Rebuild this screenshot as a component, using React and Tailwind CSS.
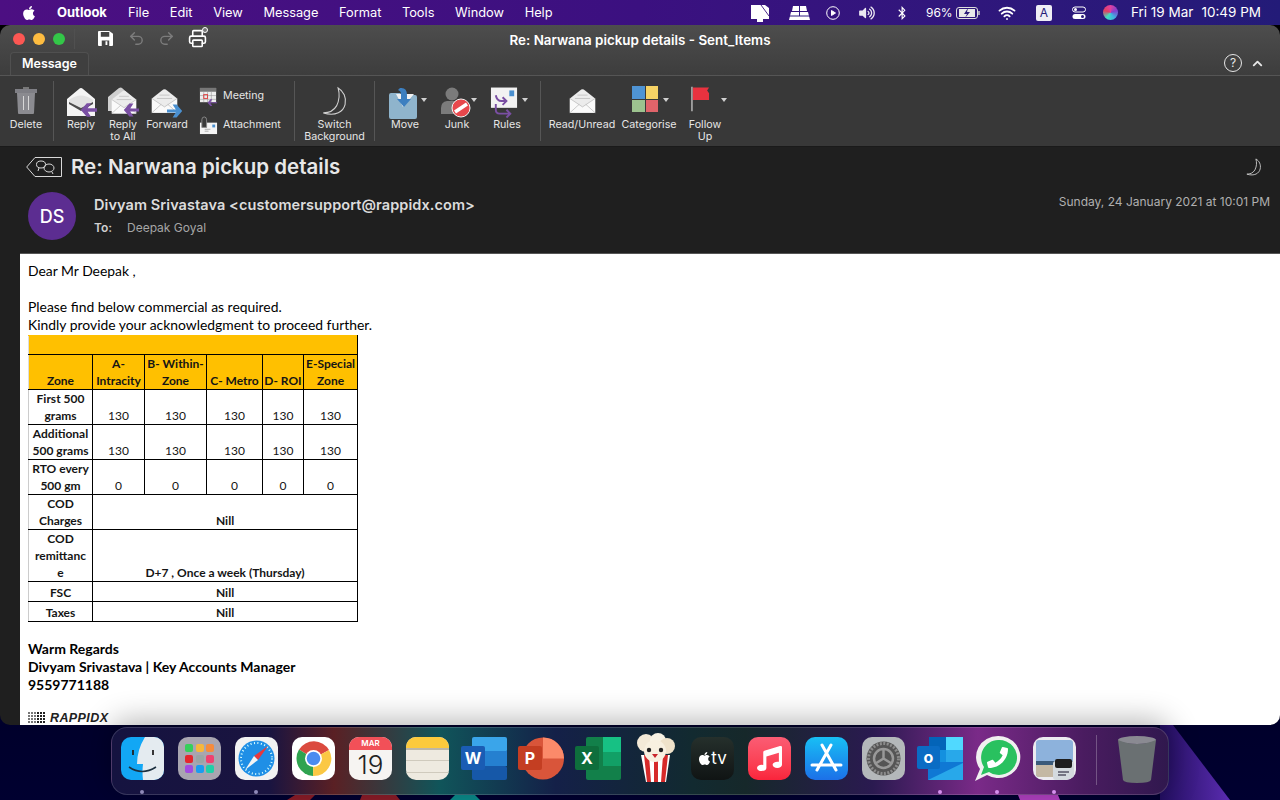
import React from 'react'
import { ChevronUp, Printer, Redo2, Undo2, Wifi } from 'lucide-react'
import { FaApple, FaBluetoothB, FaMusic, FaPhoneAlt, FaVolumeUp } from 'react-icons/fa'

function Moon({ className, width = 1.4 }) {
  return (
    <svg viewBox="0 0 36 40" className={className} fill="none" stroke="currentColor" strokeWidth={width}>
      <path d="M22 2c7 4 11 12 9 21-2 9-12 16-28 11 6 0 13-2 17-9 4-8 4-16 2-23z" />
    </svg>
  )
}

function Envelope({ className, dark }) {
  return (
    <svg viewBox="0 0 32 32" className={className}>
      <path d="M1 13 14.500 2.500q1.500-1 3 0L31 13v17H1z" fill={dark ? '#f4f4f4' : '#ececec'} />
      <path d="M1 13l15 10 15-10v17H1z" fill="#fafafa" />
      <path d="M1 13l15 10 15-10M1 30l11-10M31 30 20 20M7 13h18M10 9h12" stroke="#b5b5b5" strokeWidth=".8" fill="none" />
    </svg>
  )
}

function ArrowIcon({ color, flip, className }) {
  return (
    <svg viewBox="0 0 20 16" className={className} style={flip ? { transform: 'scaleX(-1)' } : undefined}>
      <path d="M20 6H9l4-6H8L1 8l7 8h5L9 10h11z" fill={color} />
    </svg>
  )
}

function ReplyIcon() {
  return (
    <div className="relative h-[32px] w-[31px]">
      <svg viewBox="0 0 31 32" className="h-full w-full">
        <path d="M1 13 13 3q2-2 4 0l12 10v17H1z" fill="#f4f4f4" />
        <path d="M3 14q12-9 24 0v2L15 22 3 16z" fill="#e2e2e2" />
        <path d="M3 16l12 6 12-6v2l-12 7-12-7z" fill="#4c4c4c" />
      </svg>
      <ArrowIcon color="#7a4fa3" className="absolute bottom-[1px] right-0 h-[14px] w-[17px]" />
    </div>
  )
}

function ReplyAllIcon() {
  return (
    <div className="relative h-[32px] w-[31px]">
      <svg viewBox="0 0 31 32" className="h-full w-full">
        <path d="M0 11 11 2q2-1 3 0l9 8v15H0z" fill="#cfcfcf" />
      </svg>
      <Envelope className="absolute left-[3px] top-[2px] h-[28px] w-[26px]" />
      <ArrowIcon color="#7a4fa3" className="absolute bottom-[1px] right-0 h-[14px] w-[16px]" />
    </div>
  )
}

function ForwardIcon() {
  return (
    <div className="relative h-[32px] w-[32px]">
      <Envelope className="absolute left-0 top-0 h-[30px] w-[27px]" />
      <ArrowIcon color="#4a90d0" flip className="absolute bottom-0 right-0 h-[14px] w-[16px]" />
    </div>
  )
}

function TrashRibbonIcon() {
  return (
    <svg viewBox="0 0 22 28" className="h-[28px] w-[22px]">
      <path d="M8 1h6v2H8z" fill="#777" />
      <path d="M0 3h22v4H0z" fill="#7f7f85" />
      <path d="M2 7h18l-1 20q0 1-1 1H4q-1 0-1-1z" fill="#8b8b90" />
      <path d="M8.500 10v14M13.500 10v14" stroke="#d8d8d8" strokeWidth="1" />
    </svg>
  )
}

function MeetingIcon() {
  return (
    <svg viewBox="0 0 20 20" className="h-[19px] w-[19px]">
      <rect x="1" y="1" width="17" height="15" fill="#eee" />
      <rect x="1" y="1" width="17" height="4" fill="#777" />
      <path d="M1 9h17M1 13h17M5 5v11M9 5v11M13 5v11" stroke="#999" strokeWidth=".6" />
      <rect x="5" y="8" width="4" height="4" fill="none" stroke="#e04040" strokeWidth="1" />
      <path d="M19 16h-7l2-3h-2l-3 3.500 3 3.500h2l-2-3h7z" fill="#7a4fa3" />
    </svg>
  )
}

function AttachmentIcon() {
  return (
    <svg viewBox="0 0 20 20" className="h-[19px] w-[19px]">
      <rect x="1" y="7" width="18" height="12" fill="#f4f4f4" />
      <rect x="14" y="9" width="3" height="3" fill="#4a90d0" />
      <path d="M6 14h6M6 16h4" stroke="#999" strokeWidth=".8" />
      <path d="M3 12V4q0-3 2.500-3T8 4v8H3z" fill="#3a3a3a" stroke="#8a8a8a" />
    </svg>
  )
}

function MoveIcon() {
  return (
    <svg viewBox="0 0 30 34" className="h-[34px] w-[30px]">
      <path d="M1 9q0-2 2-2h9l2 2h13q2 0 2 2v20q0 2-2 2H3q-2 0-2-2z" fill="#8fb4cc" />
      <path d="M8 8h18l-11 13z" fill="#f2f2f2" />
      <path d="M12 2q7-1 7 7v4h4l-7 8-7-8h4V8q0-3-3-4z" fill="#3c7fc0" />
    </svg>
  )
}

function JunkIcon() {
  return (
    <svg viewBox="0 0 30 32" className="h-[32px] w-[30px]">
      <circle cx="11" cy="8" r="6.500" fill="#7b7b7b" />
      <path d="M0 28v-6q0-6 6-7h10q6 1 6 7v6z" fill="#7b7b7b" />
      <circle cx="20" cy="22" r="9" fill="#e8474c" stroke="#f4f4f4" strokeWidth="1" />
      <path d="M14 26 26 18" stroke="#fff" strokeWidth="3.500" />
    </svg>
  )
}

function RulesIcon() {
  return (
    <svg viewBox="0 0 30 34" className="h-[34px] w-[29px]">
      <rect x="1" y="1" width="27" height="21" fill="#f2f2f2" />
      <rect x="20" y="4" width="5" height="6" fill="#4a90d0" />
      <path d="M6 9q1 6 6 6h4M13 11l4 4-4 4M6 18v6q0 4 4 4h10M17 24l4 4-4 4" stroke="#7a4fa3" strokeWidth="2" fill="none" />
    </svg>
  )
}

function CategoriesIcon() {
  return (
    <div className="grid h-[26px] w-[26px] grid-cols-2 grid-rows-2 gap-[1px]">
      <div className="bg-[#4f94d4]" />
      <div className="bg-[#f6d365]" />
      <div className="bg-[#9cc38f]" />
      <div className="bg-[#e0646a]" />
    </div>
  )
}

function FlagIcon() {
  return (
    <svg viewBox="0 0 20 26" className="h-[26px] w-[19px]">
      <path d="M1 0v26" stroke="#c8c8c8" strokeWidth="1.400" />
      <path d="M2 1h17l-2 3 2 3v7H2z" fill="#e8323f" />
    </svg>
  )
}

function Caret({ className }) {
  return <span className={'absolute top-[21px] h-0 w-0 border-x-[3px] border-t-[4px] border-x-transparent border-t-[#d0d0d0] ' + className} />
}

function RibbonButton({ w, label, icon, caret, shift }) {
  return (
    <div className={'relative flex shrink-0 flex-col items-center pt-[9px] ' + w}>
      <div className={'flex h-[34px] items-start ' + (shift || '')}>{icon}</div>
      <div className="mt-[-1px] text-center text-[10.700px] leading-[12px] whitespace-nowrap text-[#e6e6e6]">
        {label.map((line) => (
          <div key={line}>{line}</div>
        ))}
      </div>
      {caret && <Caret className={caret} />}
    </div>
  )
}

const Sep = () => <div className="my-[4px] w-[1px] shrink-0 bg-[#565656]" />

function StatusIcons() {
  return (
    <div className="ml-auto flex items-center text-white">
      <svg viewBox="0 0 20 18" className="h-[18px] w-[20px]">
        <path d="M1 1h14l4 3v11H1z" fill="#fff" />
        <path d="M11 1l8 11" stroke="#4a2a88" strokeWidth="1" />
        <path d="M7 15h6v3H7z" fill="#fff" />
      </svg>
      <svg viewBox="0 0 21 16" className="ml-[19px] h-[16px] w-[21px]">
        <path d="M4 1h13l1 5H3zM2 7h17l2 8H0z" fill="#fff" />
        <path d="M10.500 1v5M0 11h21M10.500 7v4" stroke="#2f1a80" strokeWidth="1" />
      </svg>
      <svg viewBox="0 0 14 14" className="ml-[16px] h-[14px] w-[14px]" fill="none" stroke="#fff">
        <circle cx="7" cy="7" r="6.300" />
        <path d="M5.500 4.500 9.500 7l-4 2.500z" fill="#fff" />
      </svg>
      <FaVolumeUp className="ml-[19px] h-[14px] w-[16px] opacity-90" />
      <FaBluetoothB className="ml-[22px] h-[14px] w-[10px]" />
      <span className="ml-[19px] w-[24px] text-[12px] whitespace-nowrap">96%</span>
      <svg viewBox="0 0 25 12" className="ml-[6px] h-[12px] w-[25px]" fill="none">
        <rect x=".5" y=".5" width="21" height="11" rx="2.500" stroke="#ddd" />
        <path d="M23 4v4" stroke="#ccc" strokeWidth="1.500" />
        <path d="M3 2h16v8H3z" fill="#e8e8e8" />
        <path d="M12 1 8 7h3l-2 4 5-6h-3z" fill="#2a1a78" />
      </svg>
      <Wifi className="ml-[17px] h-[18px] w-[18px]" strokeWidth={2.5} />
      <span className="ml-[20px] flex h-[16px] w-[16px] items-center justify-center rounded-[2px] bg-[#efeef5] text-[12px] text-[#241a78]">A</span>
      <svg viewBox="0 0 14 14" className="ml-[20px] h-[14px] w-[14px]">
        <rect x=".5" y="1" width="13" height="5" rx="2.500" fill="none" stroke="#fff" />
        <circle cx="3.500" cy="3.500" r="1.500" fill="#fff" />
        <rect x=".5" y="8" width="13" height="5" rx="2.500" fill="#fff" />
        <circle cx="10.500" cy="10.500" r="1.500" fill="#2a1a78" />
      </svg>
      <div className="ml-[17px] h-[15px] w-[15px] rounded-full bg-[conic-gradient(#e040a0,#8040d0,#40b0e0,#40e0c0,#e04060,#e040a0)]" />
      <span className="ml-[13px] text-[13.500px] whitespace-nowrap">Fri 19 Mar</span>
      <span className="ml-[8px] mr-[19px] text-[13.500px] whitespace-nowrap">10:49 PM</span>
    </div>
  )
}

function MenuBar() {
  const items = ['File', 'Edit', 'View', 'Message', 'Format', 'Tools', 'Window', 'Help']
  return (
    <div className="relative flex h-[25px] shrink-0 items-center bg-gradient-to-r from-[#4c0f82] via-[#3b1080] to-[#231b78] pl-[22px] text-[12.800px] text-white">
      <FaApple className="h-[16px] w-[14px]" />
      <span className="ml-[21px] text-[13px] font-bold">Outlook</span>
      <div className="ml-[21px] flex gap-[20.600px]">
        {items.map((item) => (
          <span key={item}>{item}</span>
        ))}
      </div>
      <StatusIcons />
    </div>
  )
}

function TitleBar() {
  return (
    <div className="relative h-[50px] shrink-0 bg-gradient-to-b from-[#4d4d4d] to-[#3d3d3d]">
      <div className="flex h-[27px] items-center pl-[13px]">
        <div className="h-[12px] w-[12px] rounded-full bg-[#fc5753]" />
        <div className="ml-[8px] h-[12px] w-[12px] rounded-full bg-[#fdbc40]" />
        <div className="ml-[8px] h-[12px] w-[12px] rounded-full bg-[#33c748]" />
        <div className="ml-[9px] h-[20px] w-[1px] bg-[#505050]" />
        <svg viewBox="0 0 16 16" className="ml-[17px] h-[15px] w-[15px] translate-x-[6px]">
          <path d="M0 1q0-1 1-1h11l4 3v12q0 1-1 1H1q-1 0-1-1z" fill="#fff" />
          <path d="M3 1h9v5H3zM4 10h8v6H4z" fill="#444" />
          <path d="M8 11h2v4H8z" fill="#fff" />
        </svg>
        <Undo2 className="ml-[21px] h-[17px] w-[17px] text-[#7c7c7c]" />
        <Redo2 className="ml-[13px] h-[17px] w-[17px] text-[#7c7c7c]" />
        <div className="relative ml-[13px]">
          <Printer className="h-[19px] w-[19px] text-white" strokeWidth={2} />
          <span className="absolute -right-[1px] -top-[2px] h-[6px] w-[6px] rounded-full border border-white bg-[#777]" />
        </div>
      </div>
      <div className="absolute inset-x-0 top-[5px] text-center text-[13.400px] font-semibold text-white">
        Re: Narwana pickup details - Sent_Items
      </div>
      <div className="flex items-end justify-between">
        <div className="ml-[10px] flex h-[23px] w-[79px] items-center justify-center rounded-t-[4px] border-x border-t border-[#505050] bg-[#3f3f3f] text-[12.500px] font-semibold text-white">
          Message
        </div>
        <div className="mb-[3px] mr-[15px] flex items-center gap-[8px] text-[#e6e6e6]">
          <div className="flex h-[18px] w-[18px] items-center justify-center rounded-full border border-[#e6e6e6] text-[12px]">?</div>
          <ChevronUp className="h-[15px] w-[15px]" strokeWidth={3} />
        </div>
      </div>
    </div>
  )
}

function Ribbon() {
  return (
    <div className="flex h-[71px] shrink-0 border-t border-[#555] bg-[#383838] py-[1px]">
      <RibbonButton w="w-[53px] pr-[1px]" label={['Delete']} icon={<TrashRibbonIcon />} />
      <Sep />
      <RibbonButton w="w-[54px]" label={['Reply']} icon={<ReplyIcon />} />
      <RibbonButton w="w-[30px]" label={['Reply', 'to All']} icon={<ReplyAllIcon />} />
      <RibbonButton w="w-[58px]" label={['Forward']} icon={<ForwardIcon />} />
      <div className="ml-[3px] flex w-[95px] shrink-0 flex-col gap-[10px] pt-[10px] text-[10.700px] text-[#e6e6e6]">
        <div className="flex items-center gap-[5px]">
          <MeetingIcon />
          <span>Meeting</span>
        </div>
        <div className="flex items-center gap-[5px]">
          <AttachmentIcon />
          <span>Attachment</span>
        </div>
      </div>
      <Sep />
      <RibbonButton w="w-[79px]" label={['Switch', 'Background']} icon={<Moon className="h-[32px] w-[28px] text-[#d0d0d0]" />} />
      <Sep />
      <RibbonButton w="w-[60px]" label={['Move']} icon={<MoveIcon />} caret="left-[46px]" shift="mr-[5px]" />
      <RibbonButton w="w-[44px]" label={['Junk']} icon={<JunkIcon />} caret="left-[36px]" shift="mr-[3px]" />
      <RibbonButton w="w-[56px]" label={['Rules']} icon={<RulesIcon />} caret="left-[43px]" shift="mr-[5px]" />
      <div className="w-[5px] shrink-0" />
      <Sep />
      <RibbonButton w="w-[82px]" label={['Read/Unread']} icon={<Envelope className="h-[30px] w-[27px]" />} />
      <RibbonButton w="w-[52px]" label={['Categorise']} icon={<CategoriesIcon />} caret="left-[40px]" shift="mr-[8px]" />
      <RibbonButton w="w-[60px]" label={['Follow', 'Up']} icon={<FlagIcon />} caret="left-[46px]" shift="mr-[9px]" />
    </div>
  )
}

function MessageHeader() {
  return (
    <div className="h-[107px] shrink-0 border-t border-[#1a1a1a] bg-[#1f1f1f] pl-[26px] pr-[10px] pt-[8px]">
      <div className="flex items-center">
        <svg viewBox="0 0 36 20" className="h-[20px] w-[36px] text-[#d8d8d8]" fill="none" stroke="currentColor">
          <path d="M9 .5h26.500v19H9L.700 10z" />
          <ellipse cx="15" cy="7.500" rx="4.500" ry="3.500" />
          <ellipse cx="23" cy="11" rx="5" ry="4" />
          <path d="M13 11l-1 3M26 15l1 2" />
        </svg>
        <h1 className="ml-[9px] text-[20.500px] leading-[24px] font-semibold text-[#e8e8e8]">Re: Narwana pickup details</h1>
        <Moon width={2} className="ml-auto mr-[7px] h-[19px] w-[18px] text-[#c4c4c4]" />
      </div>
      <div className="mt-[13px] flex">
        <div className="ml-[2px] flex h-[48px] w-[48px] shrink-0 items-center justify-center rounded-full bg-[#5c2d91] text-[18px] font-medium text-white">DS</div>
        <div className="ml-[18px] pt-[4px]">
          <div className="text-[14.500px] leading-[18px] font-semibold tracking-[.08px] text-[#dcdcdc]">Divyam Srivastava &lt;customersupport@rappidx.com&gt;</div>
          <div className="mt-[6px] flex text-[12px] leading-[16px]">
            <span className="w-[33px] font-semibold text-[#cfcfcf]">To:</span>
            <span className="text-[#a6a6a6]">Deepak Goyal</span>
          </div>
        </div>
        <div className="ml-auto mt-[1px] text-[12px] leading-[18px] text-[#b0b0b0]">Sunday, 24 January 2021 at 10:01 PM</div>
      </div>
    </div>
  )
}

const cellCls = 'border border-black p-0 text-center align-bottom'

function RateRow({ label, values, h }) {
  return (
    <tr className={h}>
      <td className={cellCls + ' border-l-[#ccc] font-bold'}>{label}</td>
      {values.map((value, i) => (
        <td key={i} className={cellCls}>{value}</td>
      ))}
    </tr>
  )
}

function SpanRow({ label, value, h }) {
  return (
    <tr className={h}>
      <td className={cellCls + ' border-l-[#ccc] font-bold'}>{label}</td>
      <td colSpan={5} className={cellCls + ' font-bold'}>{value}</td>
    </tr>
  )
}

function RateTable() {
  return (
    <table className="w-[329px] table-fixed border-collapse text-[12px] leading-[17px] text-[#151515]">
      <colgroup>
        <col className="w-[64px]" />
        <col className="w-[52px]" />
        <col className="w-[62px]" />
        <col className="w-[56px]" />
        <col className="w-[41px]" />
        <col className="w-[54px]" />
      </colgroup>
      <tbody>
        <tr className="h-[19px] bg-[#ffc000]">
          <td colSpan={6} className="border border-black border-l-[#ddd] border-t-[#ffc000] p-0" />
        </tr>
        <tr className="h-[35px] bg-[#ffc000] font-bold">
          <td className={cellCls + ' border-l-[#ddd]'}>Zone</td>
          <td className={cellCls}>A-<br />Intracity</td>
          <td className={cellCls}>B- Within-<br />Zone</td>
          <td className={cellCls}>C- Metro</td>
          <td className={cellCls}>D- ROI</td>
          <td className={cellCls}>E-Special<br />Zone</td>
        </tr>
        <RateRow h="h-[35px]" label={<>First 500<br />grams</>} values={[130, 130, 130, 130, 130]} />
        <RateRow h="h-[35px]" label={<>Additional<br />500 grams</>} values={[130, 130, 130, 130, 130]} />
        <RateRow h="h-[35px]" label={<>RTO every<br />500 gm</>} values={[0, 0, 0, 0, 0]} />
        <SpanRow h="h-[35px]" label={<>COD<br />Charges</>} value="Nill" />
        <SpanRow h="h-[52px]" label={<>COD<br />remittanc<br />e</>} value="D+7 , Once a week (Thursday)" />
        <SpanRow h="h-[20px]" label="FSC" value="Nill" />
        <SpanRow h="h-[20px]" label="Taxes" value="Nill" />
      </tbody>
    </table>
  )
}

function RappidxLogo() {
  return (
    <div className="mt-[17px] flex h-[14px] items-start">
      <div className="mt-[1px] grid grid-cols-[repeat(6,2px)] gap-[1px]">
        {Array.from({ length: 24 }).map((_, i) => (
          <div key={i} className={'h-[2px] w-[2px] ' + (i % 6 > 2 ? 'bg-[#222]' : 'bg-[#777]')} />
        ))}
      </div>
      <span className="ml-[5px] font-['Liberation_Sans',sans-serif] text-[12.500px] leading-[14px] font-bold tracking-[.4px] text-[#222] italic">RAPPIDX</span>
    </div>
  )
}

function MessageBody() {
  return (
    <div className="flex min-h-0 flex-1 overflow-hidden bg-[#1f1f1f] pl-[20px]">
      <div className="flex-1 overflow-hidden border-t border-[#555] bg-white pl-[8px] pt-[8px] font-['Lato',sans-serif] text-[13.900px] leading-[18px] text-black">
        <p>Dear Mr Deepak ,</p>
        <p className="mt-[18px]">Please find below commercial as required.</p>
        <p>Kindly provide your acknowledgment to proceed further.</p>
        <div className="mt-[1px]">
          <RateTable />
        </div>
        <div className="mt-[18px] text-[14px] font-bold">
          <p>Warm Regards</p>
          <p>Divyam Srivastava | Key Accounts Manager</p>
          <p>9559771188</p>
        </div>
        <RappidxLogo />
      </div>
    </div>
  )
}

const tile = 'relative h-[43px] w-[43px] shrink-0 overflow-hidden rounded-[10px]'

function Finder() {
  return (
    <svg viewBox="0 0 43 43" className={tile}>
      <rect width="43" height="43" fill="#12a7f5" />
      <path d="M24 0h19v43H22q-1-8 0-16h-6q0-14 8-27z" fill="#e4ebf0" />
      <path d="M12 13v5M32 13v5" stroke="#222" strokeWidth="1.800" />
      <path d="M8 30q13 9 27 0" stroke="#1c3040" strokeWidth="1.600" fill="none" />
    </svg>
  )
}

function Launchpad() {
  const colors = ['bg-[#35d05b]', 'bg-[#f6b73c]', 'bg-[#f58b3c]', 'bg-[#e5262d]', 'bg-[#9aa5a5]', 'bg-[#f04070]', 'bg-[#a24be0]', 'bg-[#1a9cf0]', 'bg-[#20cfa8]']
  return (
    <div className={tile + ' grid grid-cols-3 content-center justify-center gap-[2.500px] bg-[#a8a5b0] px-[7px]'}>
      {colors.map((c) => (
        <div key={c} className={'h-[8px] w-[8px] rounded-[2px] ' + c} />
      ))}
    </div>
  )
}

function Safari() {
  return (
    <svg viewBox="0 0 43 43" className={tile}>
      <rect width="43" height="43" fill="#f2f2f2" />
      <circle cx="21.500" cy="21.500" r="18" fill="#1f8fe6" />
      <circle cx="21.500" cy="21.500" r="15.500" fill="none" stroke="#dff" strokeWidth="2" strokeDasharray="1 2.500" />
      <path d="M33 9 19 19l4 4z" fill="#e8383c" />
      <path d="M10 33l9-14 4 4z" fill="#f4f4f4" />
    </svg>
  )
}

function Chrome() {
  return (
    <svg viewBox="0 0 43 43" className={tile}>
      <rect width="43" height="43" fill="#fff" />
      <path d="M21.500 21.500 7 12.500A17.500 17.500 0 0 1 37 13z" fill="#db4a3f" />
      <path d="M21.500 21.500 7 12.500A17.500 17.500 0 0 0 21 39z" fill="#2fa350" />
      <path d="M21.500 21.500 37 13A17.500 17.500 0 0 1 21 39z" fill="#fbc844" />
      <circle cx="21.500" cy="21.500" r="8.500" fill="#fff" />
      <circle cx="21.500" cy="21.500" r="6.800" fill="#4a8cf0" />
    </svg>
  )
}

function Calendar() {
  return (
    <div className={tile + ' flex flex-col items-center bg-[#f6f4f2] font-[Inter,sans-serif]'}>
      <div className="h-[13px] w-full bg-[#f25058] text-center text-[8px] leading-[13px] font-semibold text-white">MAR</div>
      <div className="text-[26px] leading-[29px] font-light text-[#222]">19</div>
    </div>
  )
}

function Notes() {
  return (
    <div className={tile + ' flex flex-col bg-[#eeeae0]'}>
      <div className="h-[11px] bg-[#fcca3d]" />
      <div className="h-[2px] bg-[#bdb7a8]" />
      <div className="mt-[10px] h-[1px] bg-[#cfcabd]" />
      <div className="mt-[11px] h-[1px] bg-[#cfcabd]" />
    </div>
  )
}

function Word() {
  return (
    <svg viewBox="0 0 46 43" className="h-[43px] w-[46px] shrink-0">
      <rect x="11" width="35" height="15" rx="2" fill="#3aa5ea" />
      <rect x="11" y="14" width="35" height="15" fill="#2580d0" />
      <rect x="11" y="29" width="35" height="14" rx="2" fill="#1658a8" />
      <rect y="9" width="24" height="24" rx="2" fill="#1a5cb4" />
      <text x="12" y="27" textAnchor="middle" fontSize="16" fontWeight="700" fill="#fff" fontFamily="Inter">W</text>
    </svg>
  )
}

function Powerpoint() {
  return (
    <svg viewBox="0 0 46 43" className="h-[43px] w-[46px] shrink-0">
      <circle cx="25" cy="21.500" r="21" fill="#d9553a" />
      <path d="M25 .5a21 21 0 0 1 21 21H25z" fill="#fb8a6a" />
      <rect y="9" width="24" height="24" rx="2" fill="#c43e22" />
      <text x="12" y="27" textAnchor="middle" fontSize="16" fontWeight="700" fill="#fff" fontFamily="Inter">P</text>
    </svg>
  )
}

function Excel() {
  return (
    <svg viewBox="0 0 46 43" className="h-[43px] w-[46px] shrink-0">
      <rect x="11" width="35" height="43" rx="2" fill="#12804a" />
      <rect x="28" width="18" height="15" fill="#17c184" />
      <rect x="28" y="15" width="18" height="14" fill="#12a066" />
      <rect y="9" width="24" height="24" rx="2" fill="#0e6e3c" />
      <text x="12" y="27" textAnchor="middle" fontSize="16" fontWeight="700" fill="#fff" fontFamily="Inter">X</text>
    </svg>
  )
}

function Popcorn() {
  return (
    <svg viewBox="0 0 43 50" className="-mt-[4px] h-[50px] w-[43px] shrink-0 self-start">
      <path d="M7 22h29l-4 27H12z" fill="#fff" />
      <path d="M10 22h5l2 27h-4zM20 22h4v27h-4zM29 22h5l-3 27h-4z" fill="#d62a2a" />
      <circle cx="12" cy="10" r="9" fill="#f4ead8" />
      <circle cx="24" cy="8" r="8" fill="#f8f2e4" />
      <circle cx="33" cy="13" r="8" fill="#efe2ca" />
      <circle cx="21" cy="18" r="11" fill="#f8f0e0" />
      <circle cx="15" cy="17" r="2.200" fill="#222" />
      <circle cx="27" cy="17" r="2.200" fill="#222" />
      <path d="M18 21h6l-3 4z" fill="#c9242c" />
    </svg>
  )
}

function AppleTv() {
  return (
    <div className={tile + ' flex items-center justify-center bg-gradient-to-b from-[#25302c] to-[#101414] font-[Inter,sans-serif] text-white'}>
      <FaApple className="h-[15px] w-[13px]" />
      <span className="text-[17px] leading-none">tv</span>
    </div>
  )
}

function Music() {
  return (
    <div className={tile + ' flex items-center justify-center bg-gradient-to-b from-[#fb5c74] to-[#fa233b] text-white'}>
      <FaMusic className="h-[25px] w-[25px]" />
    </div>
  )
}

function AppStore() {
  return (
    <svg viewBox="0 0 43 43" className={tile}>
      <defs>
        <linearGradient id="store" x1="0" y1="0" x2="0" y2="1">
          <stop offset="0" stopColor="#18bff5" />
          <stop offset="1" stopColor="#1c70e8" />
        </linearGradient>
      </defs>
      <rect width="43" height="43" fill="url(#store)" />
      <path d="M17 8l14 25M26 8 12 33M7 28h29" stroke="#fff" strokeWidth="3" strokeLinecap="round" />
    </svg>
  )
}

function Settings() {
  return (
    <svg viewBox="0 0 43 43" className={tile}>
      <rect width="43" height="43" fill="#b4b8ba" />
      <circle cx="21.500" cy="21.500" r="17" fill="#555" />
      <circle cx="21.500" cy="21.500" r="15" fill="none" stroke="#8c8c8c" strokeWidth="3" strokeDasharray="2 1.500" />
      <circle cx="21.500" cy="21.500" r="9.500" fill="none" stroke="#999" strokeWidth="2.500" />
      <path d="M21.500 21.500V12M21.500 21.500l8 5M21.500 21.500l-8 5" stroke="#999" strokeWidth="2.500" />
    </svg>
  )
}

function OutlookApp() {
  return (
    <svg viewBox="0 0 46 43" className="h-[43px] w-[46px] shrink-0">
      <rect x="12" width="34" height="26" rx="2" fill="#1490df" />
      <rect x="12" width="17" height="13" fill="#0364b8" />
      <rect x="29" y="13" width="17" height="13" fill="#28a8ea" />
      <rect x="29" width="17" height="13" fill="#50d9ff" />
      <path d="M11 25 46 25v16q0 2-2 2H11z" fill="#0f78d4" />
      <path d="M11 43 46 26v17z" fill="#28a8ea" />
      <rect y="9" width="23" height="23" rx="2" fill="#0a6cc4" />
      <text x="11.500" y="26" textAnchor="middle" fontSize="16" fontWeight="700" fill="#fff" fontFamily="Inter">o</text>
    </svg>
  )
}

function WhatsApp() {
  return (
    <div className="relative -mt-[2px] h-[47px] w-[47px] shrink-0 self-start">
      <svg viewBox="0 0 47 47" className="h-full w-full">
        <path d="M24 1a22 21 0 1 1-11 39L1 46l5-12A22 21 0 0 1 24 1z" fill="#f0f0f0" />
        <path d="M24 5a18 17.500 0 1 1-9 32l-8 3 3-8A18 17.500 0 0 1 24 5z" fill="#29c15f" />
      </svg>
      <FaPhoneAlt className="absolute left-[13px] top-[12px] h-[21px] w-[21px] -scale-x-100 text-white" />
    </div>
  )
}

function Preview() {
  return (
    <svg viewBox="0 0 43 43" className={tile}>
      <rect width="43" height="43" fill="#ecebf0" />
      <rect x="3" y="3" width="37" height="37" rx="3" fill="#8db2dc" />
      <path d="M3 24h37v6H3z" fill="#3a5a7a" />
      <path d="M3 28h22l3 12H6q-3 0-3-3z" fill="#c4b8a4" />
      <rect x="20" y="24" width="21" height="19" rx="3" fill="#d4dade" />
      <rect x="22" y="22" width="17" height="9" rx="2" fill="#1e1e1e" />
      <path d="M25 35h11M25 38h8" stroke="#556" strokeWidth="1.500" />
    </svg>
  )
}

function TrashDock() {
  return (
    <svg viewBox="0 0 40 50" className="-mt-[2px] h-[50px] w-[40px] shrink-0 self-start">
      <ellipse cx="20" cy="5" rx="19" ry="4" fill="#8a8a92" />
      <path d="M1 5q19 8 38 0l-5 40q-1 3-14 3T6 45z" fill="#6a7072" />
    </svg>
  )
}

function Dock() {
  const dots = [121, 235, 919, 976, 1033]
  return (
    <div className="relative z-10 mx-[111px] mt-[2px] flex h-[68px] items-start gap-[14px] rounded-[16px] border border-white/15 bg-[linear-gradient(90deg,#151340_0%,#1a1440_15%,#5a2024_21%,#10555a_31%,#142048_42%,#122a30_55%,#16282a_60%,#2a1a50_72%,#7a2a88_82%,#4a1c60_92%,#30184e_100%)] pl-[9px] pt-[9px] shadow-[0_-6px_30px_rgba(0,0,0,.3)]">
      <Finder />
      <Launchpad />
      <Safari />
      <Chrome />
      <Calendar />
      <Notes />
      <div className="-ml-[2px] -mr-[1px]"><Word /></div>
      <div className="-ml-[2px] -mr-[1px]"><Powerpoint /></div>
      <div className="-ml-[2px] -mr-[1px]"><Excel /></div>
      <Popcorn />
      <AppleTv />
      <Music />
      <AppStore />
      <Settings />
      <div className="-ml-[2px] -mr-[1px]"><OutlookApp /></div>
      <div className="-ml-[2px] -mr-[2px]"><WhatsApp /></div>
      <Preview />
      <div className="mx-[6px] -mt-[2px] h-[50px] w-[1px] shrink-0 bg-white/25" />
      <TrashDock />
      {dots.map((x, i) => (
        <span
          key={x}
          className={'absolute top-[62px] h-[4px] w-[4px] rounded-full ' + (i < 2 ? 'bg-[#8f8ab8]' : 'bg-[#d690ee]')}
          style={{ left: x - 112 + 19 }}
        />
      ))}
    </div>
  )
}

export default function App() {
  return (
    <div className="relative flex h-[800px] w-[1280px] flex-col overflow-hidden bg-[linear-gradient(180deg,#000_0%,#000030_100%)] font-[Inter,sans-serif]">
      <svg viewBox="0 0 1280 75" className="absolute bottom-0 left-0 h-[75px] w-[1280px]">
        <defs>
          <linearGradient id="wall" x1="0" y1="0" x2="1" y2="0">
            <stop offset="0" stopColor="#220e60" />
            <stop offset="1" stopColor="#5a2cb0" />
          </linearGradient>
        </defs>
        <path d="M1160 0h13l57 75h-70z" fill="url(#wall)" />
        <path d="M287 75l8-5h20l-5 5zM360 75l2-5h34l4 5z" fill="#8a1c28" />
        <path d="M450 75l5-5h20l5 5z" fill="#0a8a8a" />
        <path d="M1020 75l-2-5h40l2 5z" fill="#b040c0" />
      </svg>
      <MenuBar />
      <div className="flex h-[700px] shrink-0 flex-col overflow-hidden rounded-[10px]">
        <TitleBar />
        <Ribbon />
        <MessageHeader />
        <MessageBody />
      </div>
      <Dock />
    </div>
  )
}
